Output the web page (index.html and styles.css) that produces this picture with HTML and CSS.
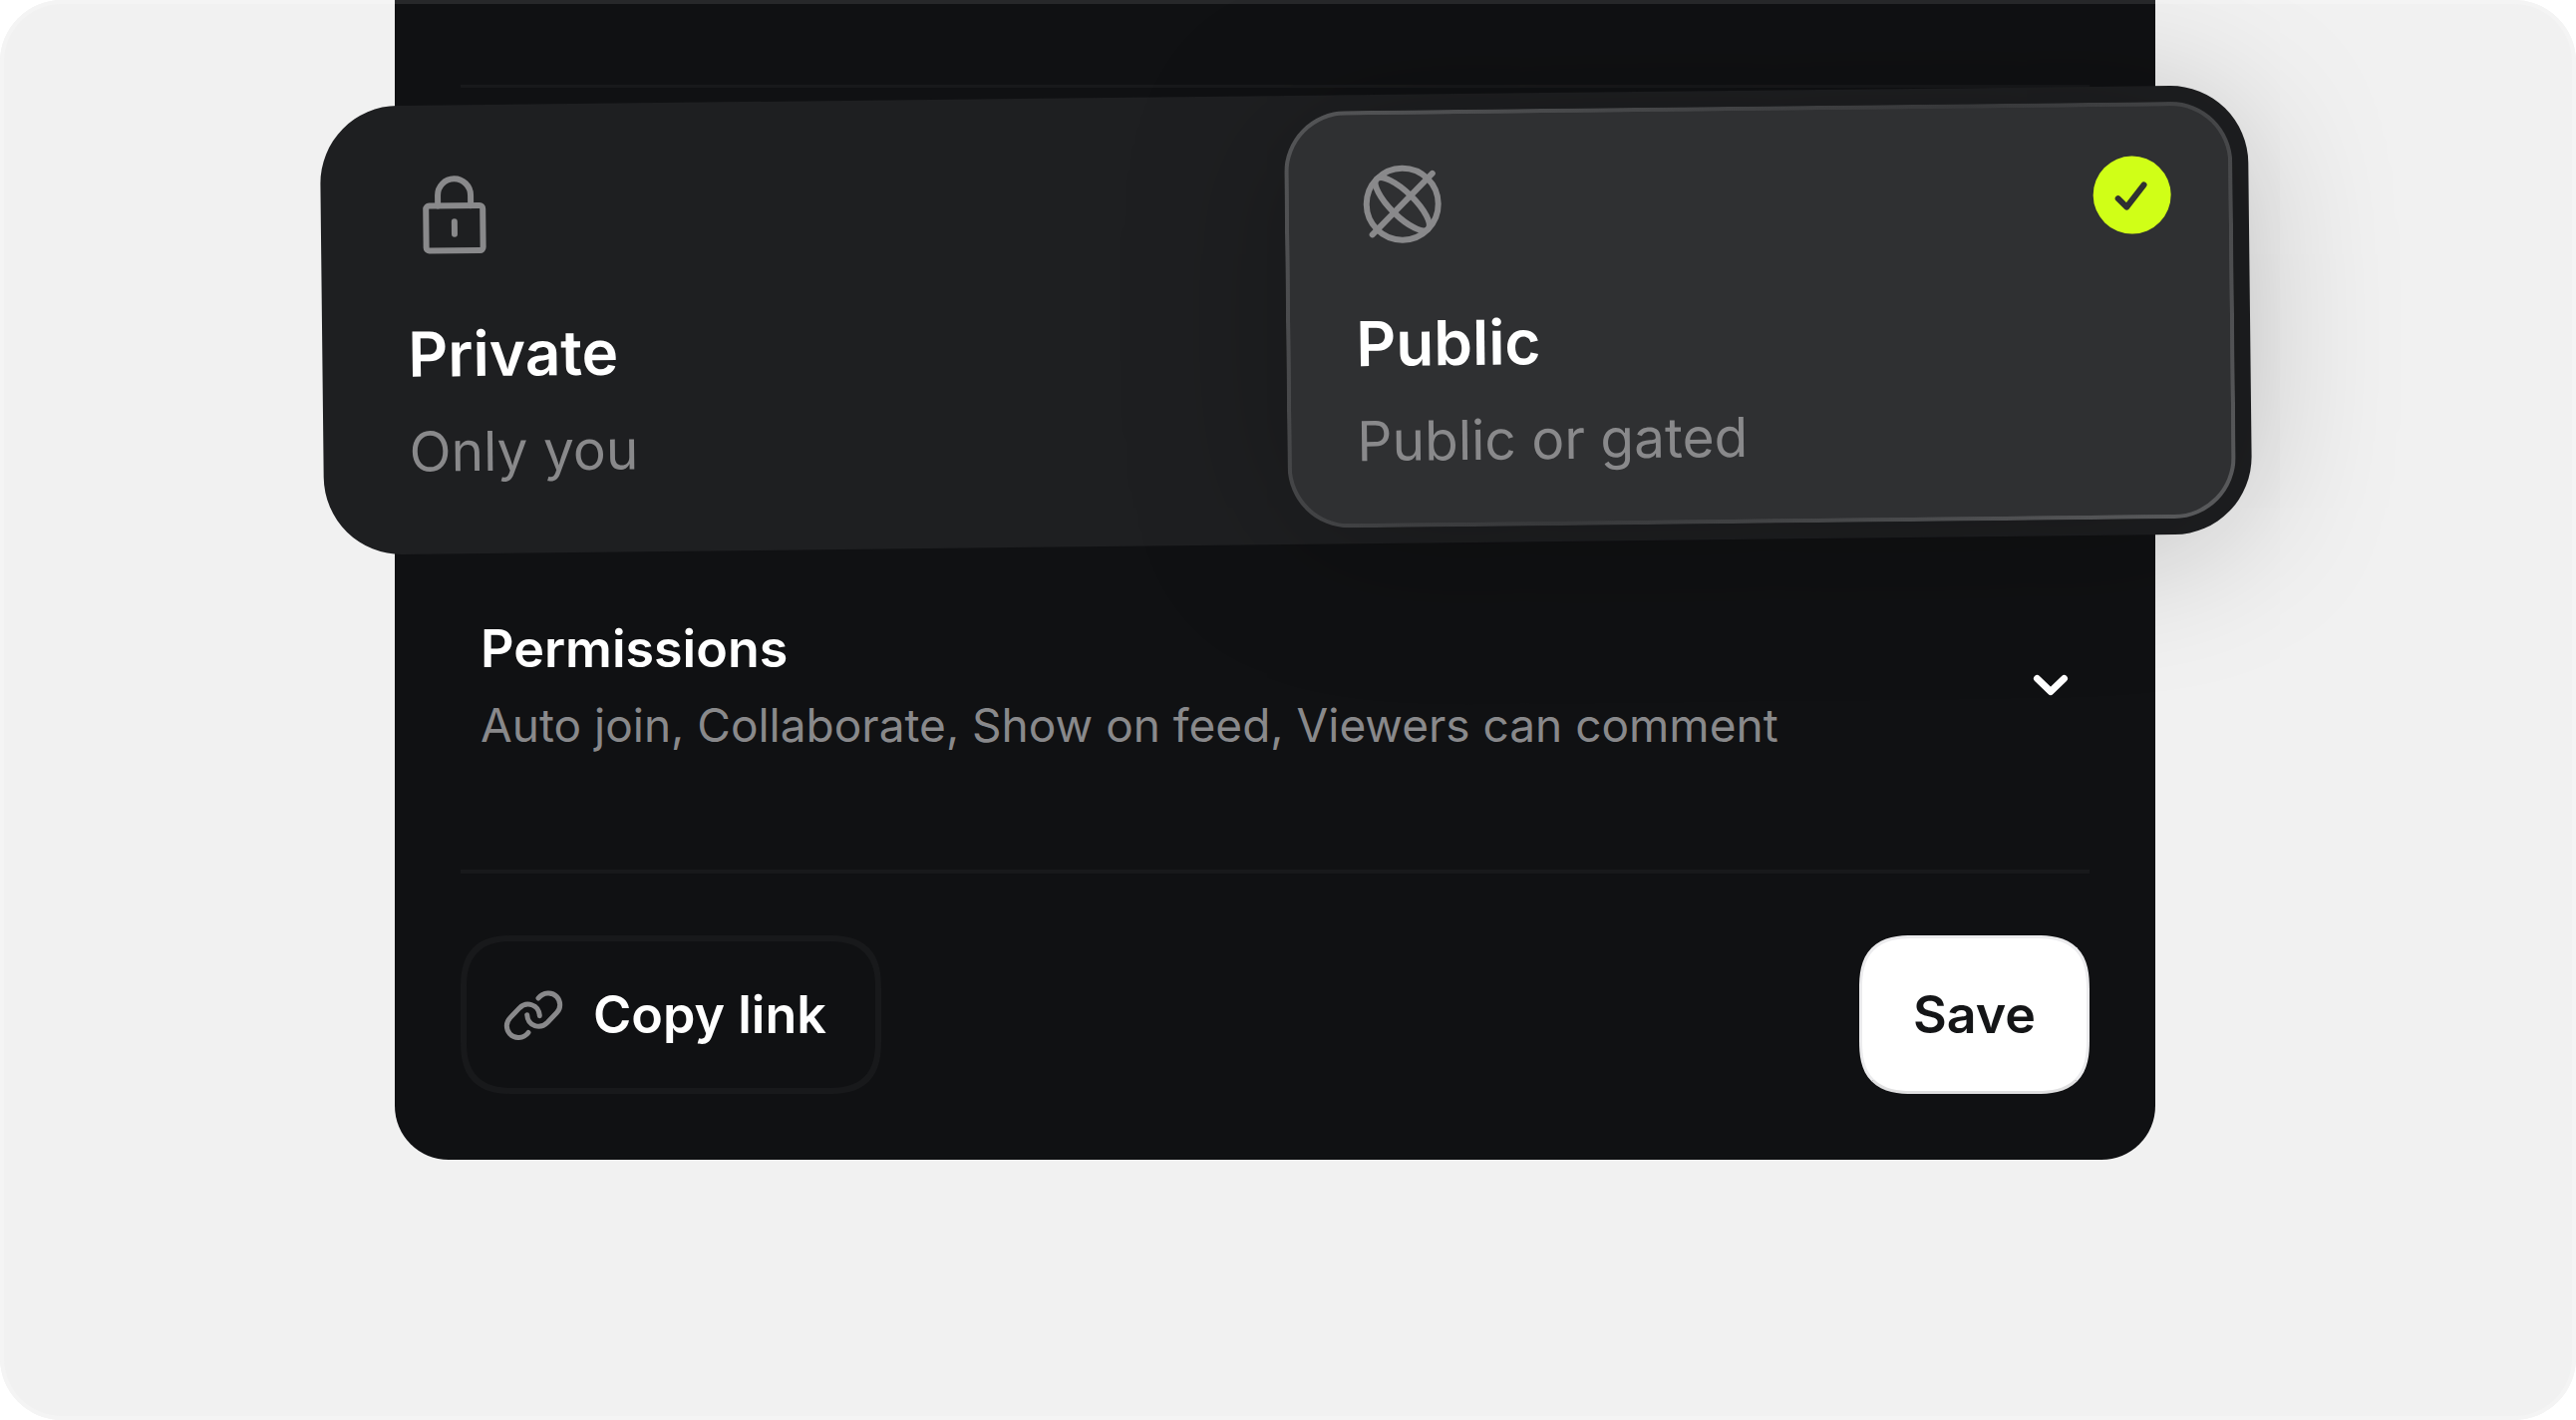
FILE: index.html
```html
<!DOCTYPE html>
<html lang="en">
<head>
<meta charset="utf-8">
<meta name="viewport" content="width=device-width, initial-scale=1">
<title>Share settings</title>
<link rel="stylesheet" href="styles.css">
</head>
<body>
<main class="stage">
  <form class="panel">
    <hr class="rule rule-top">

    <div class="visibility" role="radiogroup" aria-label="Visibility">
      <label class="option">
        <input class="option-input" type="radio" name="visibility" value="private">
        <svg class="option-icon" viewBox="0 0 24 24" aria-hidden="true">
          <rect x="4.875" y="9.75" width="14.25" height="11.25" rx="0.8"/>
          <path d="M7.875 9.75V7.125a4.125 4.125 0 0 1 8.25 0V9.75M12 13.75v3.1"/>
        </svg>
        <span class="option-title">Private</span>
        <span class="option-note">Only you</span>
      </label>
      <label class="option">
        <input class="option-input" type="radio" name="visibility" value="public" checked>
        <svg class="option-check" viewBox="0 0 78 78" aria-hidden="true">
          <path d="M25 42.500l8.500 8.500L51 29"/>
        </svg>
        <svg class="option-icon" viewBox="0 0 24 24" aria-hidden="true">
          <circle cx="12" cy="12" r="9"/>
          <ellipse cx="12" cy="12" rx="9" ry="3" transform="rotate(45 12 12)"/>
          <path d="M4.400 19.600L19.600 4.400"/>
        </svg>
        <span class="option-title">Public</span>
        <span class="option-note">Public or gated</span>
      </label>
    </div>

    <button class="permissions" type="button" aria-expanded="false">
      <span class="permissions-text">
        <span class="permissions-title">Permissions</span>
        <span class="permissions-note">Auto join, Collaborate, Show on feed, Viewers can comment</span>
      </span>
      <svg class="chevron" viewBox="0 0 48 48" aria-hidden="true">
        <path d="M10.500 17.500L24 30.500l13.500-13"/>
      </svg>
    </button>

    <hr class="rule">

    <div class="actions">
      <button class="button button-copy" type="button">
        <svg class="link-icon" viewBox="0 0 60 52" aria-hidden="true">
          <path d="M35 9C40 2.500 49 2.500 53.500 7.500C58 12.500 57.500 19.500 53.500 23.500L44 33.500C37 40.500 24.500 37.500 23.700 25.700"/>
          <path d="M35 9C40 2.500 49 2.500 53.500 7.500C58 12.500 57.500 19.500 53.500 23.500L44 33.500C37 40.500 24.500 37.500 23.700 25.700" transform="rotate(180 30 26.200)"/>
        </svg>
        Copy link
      </button>
      <button class="button button-save" type="submit">Save</button>
    </div>
  </form>
</main>
</body>
</html>
```
FILE: styles.css
```css
*, *::before, *::after { box-sizing: border-box; }

body {
  margin: 0;
  background: #fff;
  font-family: Inter, "Liberation Sans", sans-serif;
}

button, input { font: inherit; }

.stage {
  min-height: 100vh;
  padding: 0 422px 0 396px;
  border-radius: 62px;
  background: #f1f1f1;
  box-shadow: inset 0 0 0 4px #f4f4f4;
  overflow: hidden;
}

.panel {
  padding: 0 66px 66px;
  border-top: 4px solid #27282a;
  border-radius: 0 0 54px 54px;
  background: #101113;
}

.rule {
  height: 4px;
  margin: 0;
  border: 0;
  background: #18191b;
}

.rule-top {
  height: 3px;
  margin-top: 81px;
}

/* Visibility switch: tilted and wider than the panel */
.visibility {
  display: grid;
  grid-template-columns: 1fr 1fr;
  margin: 8px -161px 0 -139px;
  padding: 16px;
  border-radius: 78px;
  background: #1e1f21;
  transform: rotate(-0.64deg);
}

.option {
  position: relative;
  display: flex;
  flex-direction: column;
  min-height: 418px;
  padding: 42px 64px 40px 66px;
  border: 4px solid transparent;
  border-radius: 62px;
}

.option:has(:checked) {
  background:
    linear-gradient(#2f3032, #2f3032) padding-box,
    linear-gradient(135deg, #545557 0%, #37383a 50%, #5a5b5d 100%) border-box;
  box-shadow: 0 12px 160px rgba(0, 0, 0, 0.27);
}

.option-input {
  position: absolute;
  top: 50px;
  right: 58px;
  width: 78px;
  height: 78px;
  margin: 0;
  border-radius: 50%;
  appearance: none;
}

.option-input:checked { background: #d0ff17; }

.option-check {
  position: absolute;
  top: 50px;
  right: 58px;
  width: 78px;
  height: 78px;
  fill: none;
  stroke: #2f3032;
  stroke-width: 6;
  stroke-linecap: round;
  stroke-linejoin: round;
}

.option-icon {
  width: 96px;
  height: 96px;
  fill: none;
  stroke: #89898b;
  stroke-width: 1.5;
  stroke-linecap: round;
  stroke-linejoin: round;
}

.option-title {
  margin-top: 54px;
  color: #fff;
  font-size: 62px;
  font-weight: 600;
  line-height: 76px;
}

.option-note {
  margin-top: 25px;
  color: #89898b;
  font-size: 55px;
  line-height: 68px;
}

.permissions {
  display: flex;
  align-items: center;
  justify-content: space-between;
  width: 100%;
  padding: 71px 15px 115px 20px;
  border: 0;
  background: none;
  text-align: left;
}

.permissions-text {
  display: flex;
  flex-direction: column;
  gap: 12px;
}

.permissions-title {
  color: #fff;
  font-size: 52px;
  font-weight: 600;
  line-height: 68px;
}

.permissions-note {
  color: #89898b;
  font-size: 46px;
  line-height: 60px;
}

.chevron {
  width: 48px;
  height: 48px;
  fill: none;
  stroke: #fff;
  stroke-width: 7;
  stroke-linecap: round;
  stroke-linejoin: round;
}

.actions {
  display: flex;
  justify-content: space-between;
  margin-top: 62px;
}

.button {
  display: flex;
  align-items: center;
  gap: 30px;
  height: 159px;
  border-radius: 44px;
  font-size: 52px;
  font-weight: 600;
}

@supports (corner-shape: superellipse(1.4)) {
  .button {
    border-radius: 54px;
    corner-shape: superellipse(1.4);
  }
}

.button-copy {
  padding: 0 49px 0 37px;
  border: 6px solid #18191b;
  background: none;
  color: #fff;
}

.button-save {
  padding: 0 51px;
  border: 3px solid #ececee;
  border-bottom-color: #e0e0e1;
  background: #fff;
  color: #141517;
}

.link-icon {
  width: 60px;
  height: 52px;
  fill: none;
  stroke: #89898b;
  stroke-width: 5;
  stroke-linecap: round;
  stroke-linejoin: round;
}
```
